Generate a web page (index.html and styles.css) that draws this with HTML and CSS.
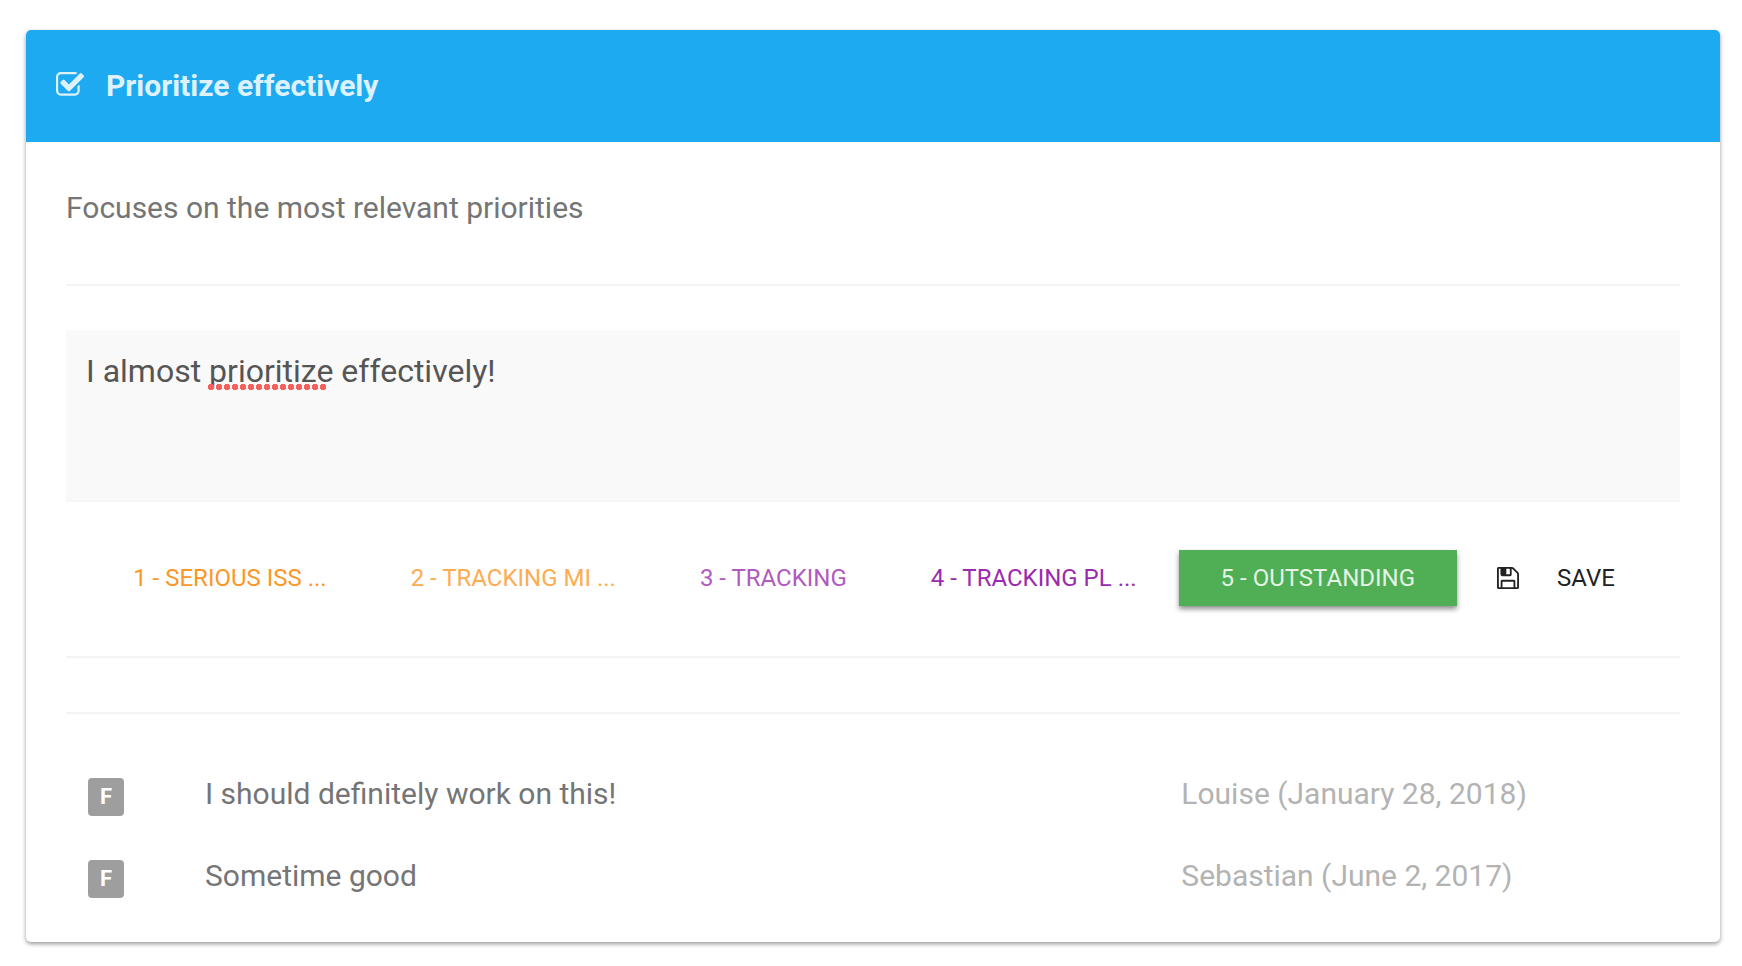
FILE: index.html
```
<!DOCTYPE html>
<html lang="en">
<head>
  <meta charset="UTF-8" />
  <meta name="viewport" content="width=device-width, initial-scale=1.0" />
  <title>Prioritize effectively</title>
  <link rel="stylesheet" href="styles.css">
</head>
<body>
  <main class="card">
    <header class="card-header">
      <svg class="check-icon" viewBox="0 0 1664 1664" fill="currentColor" aria-hidden="true"><path d="M1408 802v318q0 119-84.500 203.500t-203.500 84.500h-832q-119 0-203.500-84.500t-84.500-203.500v-832q0-119 84.500-203.500t203.500-84.500h832q63 0 117 25 15 7 18 23 3 17-9 29l-49 49q-10 10-23 10-3 0-9-2-23-6-45-6h-832q-66 0-113 47t-47 113v832q0 66 47 113t113 47h832q66 0 113-47t47-113v-254q0-13 9-22l64-64q10-10 23-10 6 0 12 3 20 8 20 29zm231-489l-814 814q-24 24-57 24t-57-24l-430-430q-24-24-24-57t24-57l110-110q24-24 57-24t57 24l263 263 647-647q24-24 57-24t57 24l110 110q24 24 24 57t-24 57z"/></svg>
      <h1>Prioritize effectively</h1>
    </header>
    <div class="card-body">
      <p class="description" id="description">Focuses on the most relevant priorities</p>
      <hr>
      <form class="assessment">
        <div class="comment">
          <textarea name="comment" aria-labelledby="description" spellcheck="false">I almost prioritize effectively!</textarea>
          <span class="spelling"></span>
        </div>
        <div class="actions">
          <button type="button" class="score score-1">1 - Serious iss ...</button>
          <button type="button" class="score score-2">2 - Tracking mi ...</button>
          <button type="button" class="score score-3">3 - Tracking</button>
          <button type="button" class="score score-4">4 - Tracking pl ...</button>
          <button type="button" class="score score-5 selected">5 - Outstanding</button>
          <button type="submit" class="save">
            <svg viewBox="0 0 1536 1536" fill="currentColor" aria-hidden="true"><path d="M384 1408h768v-384h-768v384zm896 0h128v-896q0-14-10-38.500t-20-34.500l-281-281q-10-10-34-20t-39-10v416q0 40-28 68t-68 28h-576q-40 0-68-28t-28-68v-416h-128v1280h128v-416q0-40 28-68t68-28h832q40 0 68 28t28 68v416zm-384-928v-320q0-13-9.500-22.500t-22.500-9.500h-192q-13 0-22.500 9.500t-9.500 22.500v320q0 13 9.500 22.500t22.500 9.500h192q13 0 22.500-9.500t9.500-22.500zm640 32v928q0 40-28 68t-68 28h-1344q-40 0-68-28t-28-68v-1344q0-40 28-68t68-28h928q40 0 88 20t76 48l280 280q28 28 48 76t20 88z"/><path d="M256 128h384v384h-384z"/></svg>
            Save
          </button>
        </div>
      </form>
      <hr>
      <hr class="second">
      <ul class="history">
        <li>
          <span class="badge">F</span>
          <span class="text">I should definitely work on this!</span>
          <span class="author">Louise (January 28, 2018)</span>
        </li>
        <li>
          <span class="badge">F</span>
          <span class="text">Sometime good</span>
          <span class="author">Sebastian (June 2, 2017)</span>
        </li>
      </ul>
    </div>
  </main>
</body>
</html>
```
FILE: styles.css
```
:root {
  --primary: #1eaaf1;
  --text: #757575;
  --muted: #b3b3b3;
  --line: #f4f4f4;
}
* { box-sizing: border-box; margin: 0; padding: 0; }
body {
  font-family: Roboto, sans-serif;
  font-size: 30px;
  line-height: 40px;
  color: var(--text);
  background: #fff;
  padding: 30px 22px 22px 26px;
}
.card {
  background: #fff;
  border-radius: 5px;
  box-shadow: 0 2px 4px rgba(0, 0, 0, 0.4);
}
.card-header {
  display: flex;
  align-items: center;
  gap: 22px;
  height: 112px;
  padding: 0 30px;
  background: var(--primary);
  border-radius: 5px 5px 0 0;
  color: #ddf2fd;
}
.card-header h1 {
  font-size: 30px;
  font-weight: 700;
}
.check-icon { width: 28px; height: 28px; }
.card-body { padding: 46px 40px; }
.description { margin-bottom: 56px; }
hr {
  border: none;
  height: 2px;
  background: var(--line);
}
hr.second { margin-top: 54px; }
.comment {
  position: relative;
  margin-top: 44px;
}
.comment textarea {
  display: block;
  width: 100%;
  height: 172px;
  padding: 20px;
  border: none;
  outline: none;
  resize: none;
  background: #f9f9f9;
  box-shadow: inset 0 -2px #f6f6f6;
  color: #555;
  font-family: inherit;
  font-size: 32px;
  line-height: 42px;
}
/* dots under the misspelled word */
.spelling {
  position: absolute;
  left: 142px;
  top: 54px;
  width: 120px;
  height: 6px;
  background: radial-gradient(circle at 3px 3px, #f5605a 3px, transparent 3px) 0 0 / 8px 6px;
  pointer-events: none;
}
.actions {
  display: flex;
  justify-content: center;
  margin: 48px 0 50px;
}
.actions button {
  height: 56px;
  padding: 0 42px;
  border: none;
  background: none;
  font-family: inherit;
  font-size: 24px;
  text-transform: uppercase;
  white-space: nowrap;
  cursor: pointer;
}
.actions .score-1 { color: #fb9727; }
.actions .score-2 { color: #fdac52; }
.actions .score-3 { color: #b05ac2; }
.actions .score-4 { color: #9a2bae; }
.actions .selected {
  background: #50ae55;
  color: #e3f3e4;
  box-shadow: 0 3px 5px rgba(0, 0, 0, 0.45);
}
.actions .save {
  display: flex;
  align-items: center;
  gap: 38px;
  padding: 0 40px;
  color: #222;
}
.save svg { width: 22px; height: 22px; }
.history {
  display: grid;
  gap: 42px;
  list-style: none;
  padding-top: 60px;
}
.history li {
  display: grid;
  grid-template-columns: 117px 977fr 477fr;
  height: 40px;
  padding: 0 22px;
}
.badge {
  width: 36px;
  height: 38px;
  margin-top: 4px;
  border-radius: 4px;
  background: #9e9e9e;
  color: #fff;
  font-size: 22px;
  font-weight: 700;
  line-height: 38px;
  text-align: center;
}
.author { color: var(--muted); }
```
